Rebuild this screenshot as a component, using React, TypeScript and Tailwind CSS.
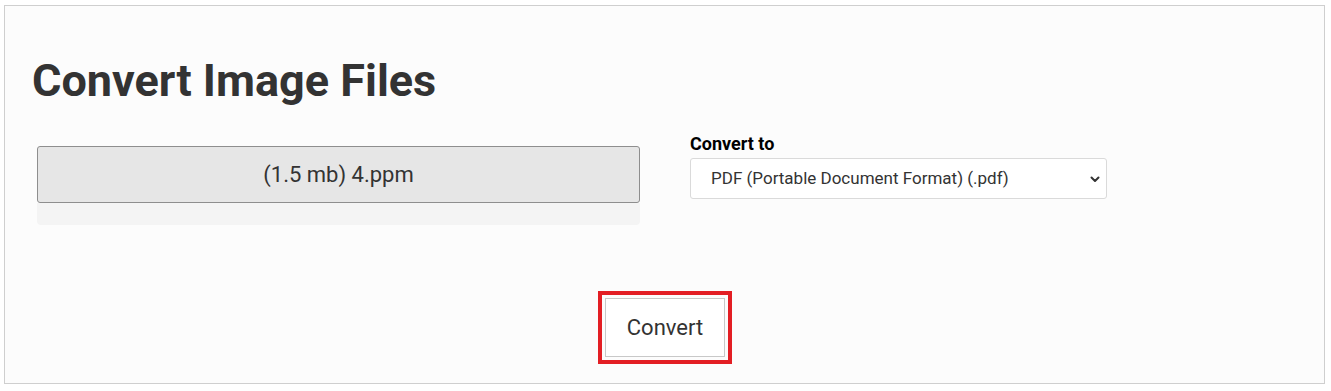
import React from "react";

export default function App() {
  return (
    <div className="bg-white w-[1331px] h-[391px] pt-[5px] pl-[4px]" style={{ fontFamily: "Roboto, 'Noto Sans', sans-serif" }}>
      <div className="w-[1321px] h-[379px] border border-[#cfcfcf] bg-[#fcfcfc] flex flex-col">
        <h1 className="mt-[49px] ml-[27px] text-[45px] leading-[52px] font-bold text-[#333]">Convert Image Files</h1>
        <div className="flex mt-[27px]">
          <div className="ml-[32px] w-[603px] mt-[12px]">
            <div className="h-[57px] bg-[#e6e6e6] border border-[#8e8e8e] rounded-[3px] flex items-center justify-center text-[22px] text-[#333]">
              (1.5 mb) 4.ppm
            </div>
            <div className="h-[22px] bg-[#f4f4f4] rounded-b-[4px]"></div>
          </div>
          <div className="ml-[50px] flex flex-col">
            <label className="text-[18px] leading-[20px] font-bold text-black">Convert to</label>
            <div className="mt-[4px] w-[417px] h-[41px] bg-white border border-[#dadada] rounded-[3px] flex items-center justify-between pl-[20px] pr-[5px] text-[17px] text-[#333]">
              <span>PDF (Portable Document Format) (.pdf)</span>
              <svg width="12" height="12" viewBox="0 0 12 12" fill="none" stroke="#333" strokeWidth="2" strokeLinecap="round" strokeLinejoin="round">
                <path d="M2.5 4.5 L6 8 L9.5 4.5" />
              </svg>
            </div>
          </div>
        </div>
        <div className="flex justify-center mt-[66px] pl-[1px]">
          <div className="border-[4px] border-[#e31e24] p-[3px]">
            <button className="w-[120px] h-[59px] bg-white border border-[#c8c8c8] text-[22px] text-[#333]">Convert</button>
          </div>
        </div>
      </div>
    </div>
  );
}
